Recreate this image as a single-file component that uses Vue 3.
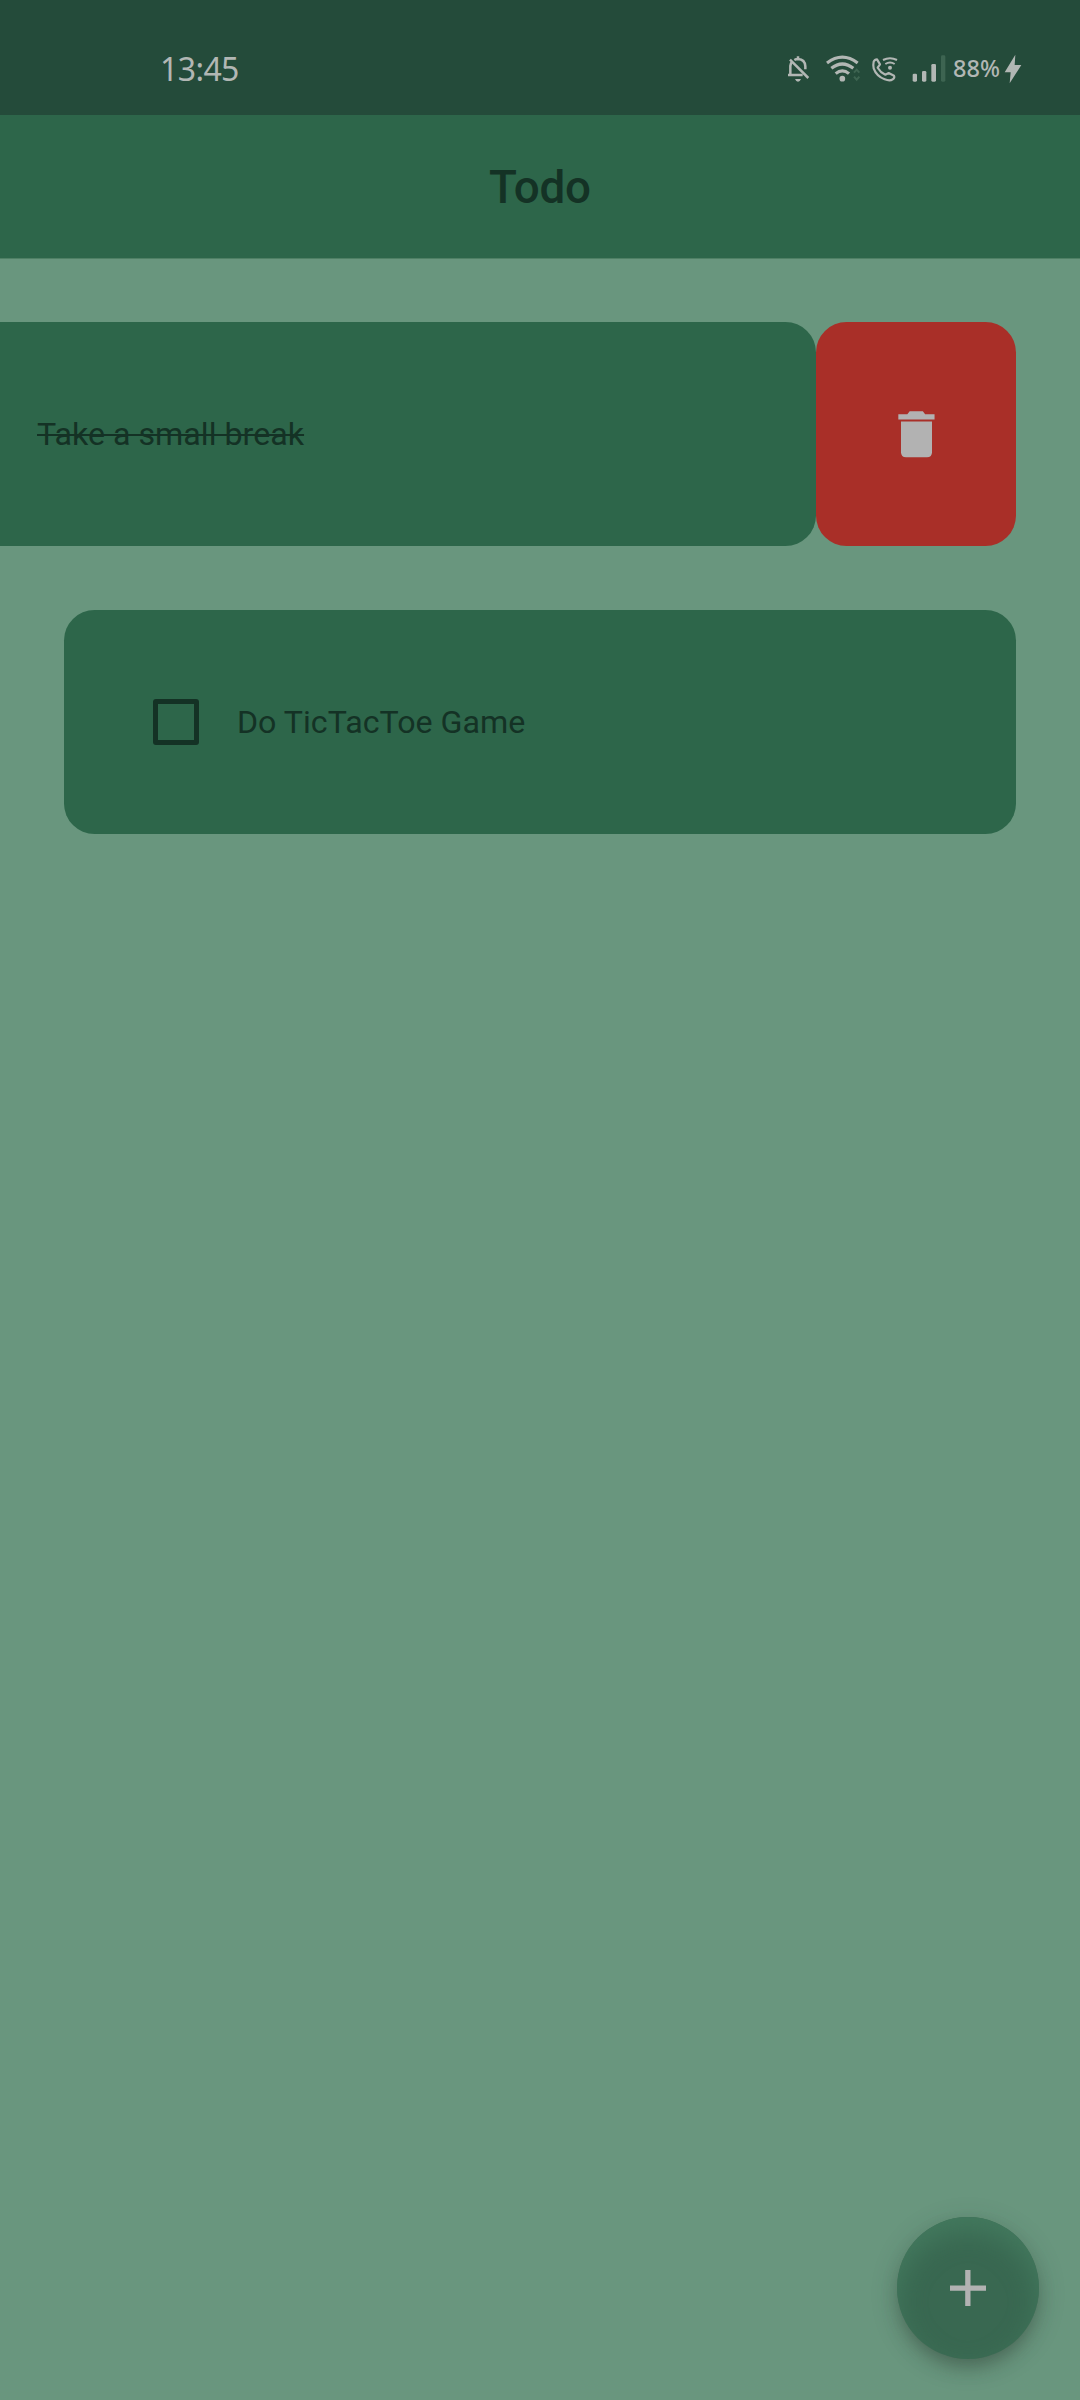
<script setup>
import { ref } from 'vue'

const todos = ref([
  { title: 'Take a small break', done: true, open: true },
  { title: 'Do TicTacToe Game', done: false, open: false },
])
</script>

<template>
  <div class="screen">
    <header class="status">
      <span class="time">13:45</span>
      <div class="tray">
        <svg class="bell" width="24" height="30" viewBox="0 0 72 90" fill="none" stroke="currentColor" stroke-width="7.5">
          <path d="M13 65V36Q14 28 18 24M25 18Q30 15 36 15Q57 16 58 37V46M6 63H50M36 7V15" />
          <path d="M12 17L67 72" />
          <path d="M27 75H45Q42 83 36 83Q30 83 27 75Z" fill="currentColor" stroke="none" />
        </svg>
        <svg class="wifi" width="38" height="30" viewBox="0 0 114 90" fill="none" stroke="currentColor" stroke-width="9.5">
          <path d="M9 27Q55 -8 101 27" />
          <path d="M22 43Q55 17 88 43" />
          <path d="M35 59Q55 42 75 59" />
          <circle cx="55" cy="74" r="8.5" fill="currentColor" stroke="none" />
          <path d="M90 56L98 47L106 56M90 68L98 77L106 68" stroke="#3d6451" stroke-width="6" />
        </svg>
        <svg class="call" width="28" height="30" viewBox="0 0 84 90" fill="none" stroke="currentColor" stroke-width="6.5" stroke-linejoin="round">
          <path d="M8 23Q11 16 18 16L27 31L20 41Q28 55 43 62L53 57L69 65Q72 71 65 76Q57 82 41 76Q16 66 8 43Q6 31 8 23Z" />
          <path d="M36 18Q57 7 78 18" stroke-width="6" />
          <path d="M43 30Q57 21 71 30" stroke-width="6" />
          <circle cx="57" cy="41" r="6" fill="currentColor" stroke="none" />
        </svg>
        <svg class="signal" width="36" height="30" viewBox="0 0 108 90" fill="currentColor">
          <rect x="8" y="59" width="13" height="24" rx="4" />
          <rect x="36" y="51" width="13" height="32" rx="4" />
          <rect x="64" y="30" width="14" height="53" rx="4" />
          <rect x="93" y="4" width="13" height="79" rx="4" fill="#3d6451" />
        </svg>
        <span class="percent">88%</span>
        <svg class="bolt" width="18" height="30" viewBox="0 0 54 90" fill="currentColor">
          <path d="M34 2L2 55H20L17 88L52 33H32Z" />
        </svg>
      </div>
    </header>

    <div class="appbar"><h1>Todo</h1></div>

    <main class="list">
      <div v-for="todo in todos" :key="todo.title" class="row" :class="{ open: todo.open }">
        <div class="card">
          <span class="box"></span>
          <span class="label" :class="{ done: todo.done }">{{ todo.title }}</span>
        </div>
        <button v-if="todo.open" class="remove" aria-label="Delete">
          <svg width="61" height="61" viewBox="0 0 24 24" fill="currentColor">
            <path d="M5.9 8.2V18.2Q5.9 20.2 7.9 20.2H16.1Q18.1 20.2 18.1 18.2V8.2Q18.1 6.1 18.1 6.1H5.9Z" />
            <path d="M4.85 3.2H8.4L9.3 2.1H14.5L15.4 3.2H19.1V5.3H4.85Z" />
          </svg>
        </button>
      </div>
    </main>

    <button class="fab" aria-label="Add">
      <svg width="36" height="36" viewBox="0 0 36 36" fill="currentColor">
        <path d="M15.2 0H20.5V15.5H36V20.8H20.5V36H15.2V20.8H0V15.5H15.2Z" />
      </svg>
    </button>
  </div>
</template>

<style>
body {
  margin: 0;
}
</style>

<style scoped>
.screen {
  position: relative;
  width: 1080px;
  height: 2400px;
  overflow: hidden;
  background: #69967e;
  font-family: Roboto, sans-serif;
  color: #143225;
}
.status {
  display: flex;
  box-sizing: border-box;
  justify-content: space-between;
  height: 115px;
  padding: 54px 58px 0 160px;
  background: #244b3a;
  color: #b2b7b4;
  font-family: 'Noto Sans', sans-serif;
}
.time {
  font-size: 32px;
  line-height: 29px;
  letter-spacing: -0.6px;
}
.tray {
  display: flex;
}
.wifi { margin-left: 14px; }
.call { margin-left: 9px; }
.signal { margin-left: 11px; }
.percent {
  width: 50px;
  margin-left: 7px;
  font-size: 23.5px;
  font-weight: 500;
  line-height: 28px;
  white-space: nowrap;
}
.bolt { margin-left: 1px; }
.appbar {
  display: flex;
  box-sizing: border-box;
  align-items: center;
  justify-content: center;
  height: 144px;
  padding-top: 2px;
  background: #2d664a;
  border-bottom: 1px solid #4f8065;
}
h1 {
  margin: 0;
  font-size: 45.8px;
  font-weight: 500;
  line-height: 54px;
  letter-spacing: -0.2px;
}
.list {
  display: flex;
  flex-direction: column;
  gap: 63.6px;
  padding: 62.6px 63.6px 0;
}
.row {
  display: flex;
  height: 224.4px;
}
.row.open {
  justify-content: flex-end;
}
.card {
  display: flex;
  box-sizing: border-box;
  flex: 0 0 952.8px;
  align-items: center;
  padding-left: 89.4px;
  border-radius: 30.5px;
  background: #2d664a;
}
.box {
  box-sizing: border-box;
  width: 46px;
  height: 46px;
  border: 5px solid #143225;
  border-radius: 3px;
}
.label {
  margin-left: 38px;
  padding-top: 1px;
  font-size: 32.2px;
  line-height: 38px;
  white-space: nowrap;
}
.done {
  text-decoration: line-through;
  text-decoration-thickness: 2px;
}
.remove {
  display: flex;
  flex: 0 0 200px;
  align-items: center;
  justify-content: center;
  padding: 5px 0 0;
  border: 0;
  border-radius: 30.5px;
  background: #a92f28;
  color: #b2b2b2;
}
.fab {
  position: absolute;
  right: 41px;
  bottom: 41px;
  display: flex;
  align-items: center;
  justify-content: center;
  width: 142.5px;
  height: 142.5px;
  padding: 0;
  border: 0;
  border-radius: 50%;
  background: #396851;
  color: #b2b2b2;
  box-shadow: inset 0 14px 26px #43795e, 0 10px 18px -3px rgba(40, 50, 42, 0.36), 0 6px 28px rgba(40, 60, 50, 0.2);
}
</style>
